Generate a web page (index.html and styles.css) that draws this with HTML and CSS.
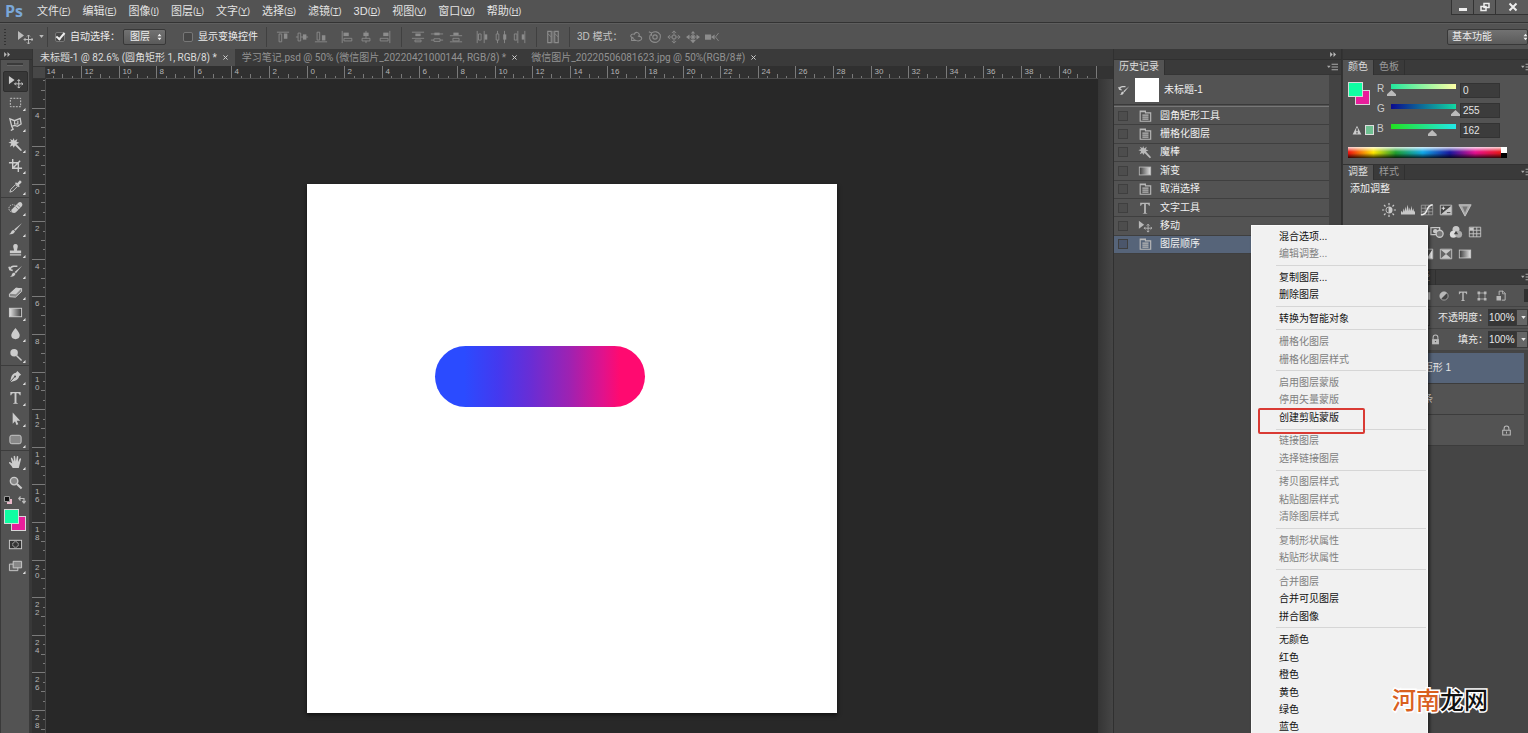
FILE: index.html
```html
<!DOCTYPE html>
<html lang="zh-CN">
<head>
<meta charset="utf-8">
<title>未标题-1 @ 82.6%</title>
<link rel="stylesheet" href="styles.css">
</head>
<body>
<svg class="defs" aria-hidden="true">
  <defs>
    <linearGradient id="fade"><stop offset="0" stop-color="#3a3a3a"/><stop offset="1" stop-color="#e4e4e4"/></linearGradient>
    <linearGradient id="fade-r"><stop offset="0" stop-color="#e4e4e4"/><stop offset="1" stop-color="#3a3a3a"/></linearGradient>
  </defs>
  <symbol id="move" viewBox="0 0 16 16"><path d="M1 2v9l6-4.500z" fill="currentColor"/><path d="M11.500 6v9M7 10.500h9M10 7.500l1.500-1.500L13 7.500M10 13.500l1.500 1.500 1.500-1.500M8.500 9L7 10.500 8.500 12M14.500 9l1.500 1.500-1.500 1.500" fill="none" stroke="currentColor"/></symbol>
  <symbol id="marquee" viewBox="0 0 16 16"><rect x="2.500" y="3.500" width="11" height="9" fill="none" stroke="currentColor" stroke-dasharray="2 1.300"/></symbol>
  <symbol id="lasso" viewBox="0 0 16 16"><path d="M4 11L2 3l5 2 6-2.500 1 6-4 2.500-3-1-3 1 1.500 3L3 15.500" fill="none" stroke="currentColor" stroke-width="1.400"/><path d="M7 5v3.500h3.500V5" fill="none" stroke="currentColor" stroke-width="1.200"/></symbol>
  <symbol id="wand" viewBox="0 0 16 16"><path d="M6 1l1 3 3-2-1 3 3 1-3 1.500L15 14l-1.500 1L7.500 9 6 11.500 5 9l-3 1.500L3.500 7 .5 6l3-1.500L2 2l3 1.500z" fill="currentColor"/></symbol>
  <symbol id="crop" viewBox="0 0 16 16"><path d="M5 1v10h10M1 5h10v10M5 11l8-8" fill="none" stroke="currentColor" stroke-width="1.500"/></symbol>
  <symbol id="dropper" viewBox="0 0 16 16"><path d="M2 14l1-3 5-5 2 2-5 5z" fill="none" stroke="currentColor"/><path d="M7.500 4.500l1-1 1.300 1L12 2c1-1 3 .5 2.200 2L11.500 6.500l1 1.300-1 1z" fill="currentColor"/></symbol>
  <symbol id="heal" viewBox="0 0 16 16"><circle cx="5" cy="9" r="4" fill="none" stroke="currentColor" stroke-dasharray="1.500 1"/><path d="M4 10l7-7q2-1.500 3.500 0t.5 3.500l-6.500 6.500q-2 1.500-4 0t-.5-3z" fill="currentColor"/><path d="M8 7l3.500 3.500M10 5l3 3" stroke="#666" stroke-width=".7"/></symbol>
  <symbol id="brush" viewBox="0 0 16 16"><path d="M15 2L8 10.500 6.500 9z" fill="currentColor"/><path d="M6 9.500L7.500 11q-1.500 4-6.500 3 2-.5 2.500-2.500T6 9.500z" fill="currentColor"/></symbol>
  <symbol id="stamp" viewBox="0 0 16 16"><path d="M6 7Q4.500 2 8 2t2 5l-.5 2H14v3H2V9h4.500zM2 13h12v1.500H2z" fill="currentColor"/></symbol>
  <symbol id="hbrush" viewBox="0 0 16 16"><path d="M15 3L8.500 11 7 9.500zM6.500 10l1.500 1.500q-1 3.500-6 3 2-.5 2-2t2.500-2.500z" fill="currentColor"/><path d="M2 7q1-4 5-3.500h3M5 8L2 7 1 4" fill="none" stroke="currentColor" stroke-width="1.600"/></symbol>
  <symbol id="eraser" viewBox="0 0 16 16"><path d="M1.500 10.500l7-6.500 6 .5-6 6.500z" fill="currentColor"/><path d="M1.500 10.500v3l6.500.5 6.500-6V4.500" fill="#888" stroke="currentColor"/><path d="M1.500 10.500l7-6.500 6 .5-6 6.500z" fill="currentColor"/></symbol>
  <symbol id="gradient" viewBox="0 0 16 16"><rect x="1.500" y="3.500" width="13" height="9" fill="url(#fade-r)" stroke="currentColor"/></symbol>
  <symbol id="drop" viewBox="0 0 16 16"><path d="M8 2q5 6 4.500 8.500Q12 14 8 14t-4.500-3.500Q3 8 8 2z" fill="currentColor"/></symbol>
  <symbol id="dodge" viewBox="0 0 16 16"><circle cx="6.500" cy="6" r="4" fill="currentColor"/><path d="M9 9l5.500 5.500" stroke="currentColor" stroke-width="1.600"/></symbol>
  <symbol id="pen" viewBox="0 0 16 16"><path d="M10 2l4 4-2 1.500q-1 4-4.500 5L2 14l1.500-5.500q1-3.500 5-4.500z" fill="currentColor"/><path d="M2 14l5-5.500" stroke="#444"/><circle cx="7.500" cy="8" r="1" fill="#444"/></symbol>
  <symbol id="type" viewBox="0 0 16 16"><path d="M2.500 2h11v3.500h-1q-.3-2-2-2H9V13q0 1 1.500 1v.7h-5V14Q7 14 7 13V3.500H5.500q-1.700 0-2 2h-1z" fill="currentColor"/></symbol>
  <symbol id="arrow" viewBox="0 0 16 16"><path d="M5 1.500v12l2.500-2.500 1.500 4 2-1-1.700-3.700H13z" fill="currentColor"/></symbol>
  <symbol id="shape" viewBox="0 0 16 16"><rect x="2" y="3.500" width="12" height="9" rx="2" fill="#888" stroke="currentColor"/></symbol>
  <symbol id="hand" viewBox="0 0 16 16"><path d="M5 15q-1-2.500-4-5.500 0-1.500 1.500-.8L4.500 10 3 4.500q.8-1.300 1.600 0L6.300 8 6 2.500q.8-1.500 1.600 0L8.400 8l1-5.500q1-1 1.500.2L10.700 8.500l1.800-3.700q1.200-.8 1.500.5L12.500 11 11.500 15z" fill="currentColor"/></symbol>
  <symbol id="zoom" viewBox="0 0 16 16"><circle cx="6.500" cy="6.500" r="4" fill="#888" stroke="currentColor" stroke-width="1.500"/><path d="M9.500 9.500l5 5" stroke="currentColor" stroke-width="2.200"/></symbol>
  <symbol id="mask" viewBox="0 0 16 16"><rect x="1.500" y="3.500" width="13" height="9" fill="#333" stroke="currentColor"/><circle cx="8" cy="8" r="3" fill="none" stroke="currentColor" stroke-dasharray="1.500 .8"/></symbol>
  <symbol id="screen" viewBox="0 0 16 16"><path d="M1.500 6.500h9v7h-9z" fill="#666" stroke="currentColor"/><path d="M5.500 3.500h9v7h-9z" fill="#888" stroke="currentColor"/></symbol>
  <symbol id="doc" viewBox="0 0 16 16"><path d="M2.500 2.500h6v2h6v9.500h-12z" fill="none" stroke="currentColor" stroke-width="1.300"/><path d="M2.500 3h6M5 7h7M5 9.300h7M5 11.600h7" stroke="currentColor" stroke-width="1.300"/></symbol>
  <symbol id="fadebox" viewBox="0 0 16 16"><rect x="1.500" y="3.500" width="13" height="9" fill="url(#fade)" stroke="currentColor"/></symbol>
  <symbol id="alt" viewBox="0 0 16 16"><path d="M1 2.500h14" stroke="currentColor"/><path d="M3.500 4.500h3v9h-3z" fill="none" stroke="currentColor"/><path d="M9 4h4v6H9z" fill="currentColor"/></symbol>
  <symbol id="amd" viewBox="0 0 16 16"><path d="M1 8h14" stroke="currentColor"/><path d="M3.500 3.500h3v9h-3z" fill="#535353" stroke="currentColor"/><path d="M9 5h4v6H9z" fill="currentColor"/></symbol>
  <symbol id="abt" viewBox="0 0 16 16"><path d="M1 13.500h14" stroke="currentColor"/><path d="M3.500 2.500h3v9h-3z" fill="none" stroke="currentColor"/><path d="M9 6h4v6H9z" fill="currentColor"/></symbol>
  <symbol id="alf" viewBox="0 0 16 16"><path d="M2.500 1v14" stroke="currentColor"/><path d="M4 3h6v4H4z" fill="currentColor"/><path d="M4.500 9.500h9v3h-9z" fill="none" stroke="currentColor"/></symbol>
  <symbol id="act" viewBox="0 0 16 16"><path d="M8 1v14" stroke="currentColor"/><path d="M5 3h6v4H5z" fill="currentColor"/><path d="M3.500 9.500h9v3h-9z" fill="#535353" stroke="currentColor"/></symbol>
  <symbol id="art" viewBox="0 0 16 16"><path d="M13.500 1v14" stroke="currentColor"/><path d="M6 3h6v4H6z" fill="currentColor"/><path d="M2.500 9.500h9v3h-9z" fill="none" stroke="currentColor"/></symbol>
  <symbol id="dvt" viewBox="0 0 16 16"><path d="M1 2.500h14M1 9.500h14" stroke="currentColor"/><path d="M5 4h6v3H5z" fill="currentColor"/><path d="M4.500 11.500h7v2h-7z" fill="none" stroke="currentColor"/></symbol>
  <symbol id="dvm" viewBox="0 0 16 16"><path d="M1 4.500h14M1 11.500h14" stroke="currentColor"/><path d="M5 3h6v3H5z" fill="currentColor"/><path d="M4.500 10h7v3h-7z" fill="#535353" stroke="currentColor"/></symbol>
  <symbol id="dvb" viewBox="0 0 16 16"><path d="M1 6.500h14M1 13.500h14" stroke="currentColor"/><path d="M5 3h6v3H5z" fill="currentColor"/><path d="M4.500 9.500h7v3h-7z" fill="none" stroke="currentColor"/></symbol>
  <symbol id="dhl" viewBox="0 0 16 16"><path d="M2.500 1v14M10.500 1v14" stroke="currentColor"/><path d="M4 4.500h3v7H4z" fill="none" stroke="currentColor"/><path d="M11 5h3v6h-3z" fill="currentColor"/></symbol>
  <symbol id="dhc" viewBox="0 0 16 16"><path d="M4 1v14M12 1v14" stroke="currentColor"/><path d="M2.500 4.500h3v7h-3z" fill="#535353" stroke="currentColor"/><path d="M10.500 5h3.500v6h-3.500z" fill="currentColor"/></symbol>
  <symbol id="dhr" viewBox="0 0 16 16"><path d="M5.500 1v14M13.500 1v14" stroke="currentColor"/><path d="M1.500 4.500h3v7h-3z" fill="none" stroke="currentColor"/><path d="M10 5h3v6h-3z" fill="currentColor"/></symbol>
  <symbol id="auto" viewBox="0 0 16 16"><path d="M2 1.500h4v13H2zM10 1.500h4v13h-4z" fill="none" stroke="currentColor" stroke-width="1.300"/><path d="M8 1v14M2 4l4 4M10 4l4 4" stroke="currentColor"/></symbol>
  <symbol id="orbit" viewBox="0 0 16 16"><path d="M5 9Q0 8 3 5q2-1 3 0 1-3 4-2 3 2 1 4 5 1 3 4-3 3-8 0l-3-3M3 8v4h4" fill="none" stroke="currentColor" stroke-width="1.200"/></symbol>
  <symbol id="roll" viewBox="0 0 16 16"><circle cx="8" cy="8" r="2.500" fill="none" stroke="currentColor" stroke-width="1.300"/><path d="M4 3.500q6-4 10 2 1 6-4 8.500-6 1-8-4-.5-3 1-5M1 2l3 1.500v3" fill="none" stroke="currentColor" stroke-width="1.200"/></symbol>
  <symbol id="pan" viewBox="0 0 16 16"><path d="M8 1v5M8 10v5M1 8h5M10 8h5M5.500 3.500L8 1l2.500 2.500M5.500 12.500L8 15l2.500-2.500M3.500 5.500L1 8l2.500 2.500M12.500 5.500L15 8l-2.500 2.500M6 6h4v4H6z" fill="none" stroke="currentColor"/></symbol>
  <symbol id="slide" viewBox="0 0 16 16"><path d="M8 1l2.500 3h-5zM8 15l-3.500-4h7zM0 8l4-3v6zM16 8l-4-3v6z" fill="currentColor"/><path d="M4 8h8M8 4v7M6 6l4 4M10 6l-4 4" stroke="currentColor" stroke-width="1.200"/></symbol>
  <symbol id="cam" viewBox="0 0 16 16"><path d="M0 5h7v6H0zM7 8l4-3v6z" fill="currentColor"/><path d="M15.500 3.500L12 8l3.500 4.500" fill="none" stroke="currentColor"/></symbol>
  <symbol id="sun" viewBox="0 0 16 16"><path d="M8 4.500a3.500 3.500 0 000 7z" fill="none" stroke="currentColor"/><path d="M8 4a4 4 0 010 8z" fill="currentColor"/><path d="M8 0v2.500M8 13.500V16M0 8h2.500M13.500 8H16M2.300 2.300L4 4M12 12l1.700 1.700M2.300 13.700L4 12M12 4l1.700-1.700" stroke="currentColor" stroke-width="1.400"/></symbol>
  <symbol id="levels" viewBox="0 0 16 16"><path d="M0 13v-3l1-1 1 2 1-5 1 4 1-6 1 5 1.500-7L9 9l1-4 1 4 1-6 1 6 1-3 1 4 1-1v4z" fill="currentColor"/></symbol>
  <symbol id="curves" viewBox="0 0 16 16"><path d="M1.500 2.500h13v11h-13zM1.500 6h13M1.500 10h13M6 2.500v11M10 2.500v11" fill="none" stroke="#aaa" stroke-width=".8"/><path d="M1 13.500q5 0 7-5.500t6.500-6" fill="none" stroke="#eee" stroke-width="1.500"/></symbol>
  <symbol id="expo" viewBox="0 0 16 16"><path d="M1.500 2.500h13v11h-13z" fill="#444" stroke="currentColor"/><path d="M14 3v10H2z" fill="currentColor"/><path d="M3 6h4M5 4v4" stroke="#eee"/><path d="M9 11h4" stroke="#333"/></symbol>
  <symbol id="vib" viewBox="0 0 16 16"><path d="M1 2h14L8 15z" fill="#aaa" stroke="currentColor"/><path d="M5 4h6L8 11z" fill="#777"/></symbol>
  <symbol id="photo" viewBox="0 0 16 16"><path d="M1 3h10v8H1z" fill="none" stroke="currentColor" stroke-width="1.500"/><circle cx="6" cy="7" r="2.500" fill="currentColor"/><circle cx="11" cy="10" r="4" fill="#777" stroke="currentColor" stroke-width="1.500"/></symbol>
  <symbol id="mixer" viewBox="0 0 16 16"><circle cx="8" cy="5" r="4" fill="currentColor"/><circle cx="5" cy="10.500" r="4" fill="#ddd"/><circle cx="11" cy="10.500" r="4" fill="#aaa"/><path d="M8 6.500l2.500 4h-5z" fill="#444"/></symbol>
  <symbol id="lookup" viewBox="0 0 16 16"><path d="M1.500 2.500h13v11h-13z" fill="#555" stroke="currentColor"/><path d="M2 3h4v3H2z" fill="currentColor"/><path d="M1.500 6h13M1.500 10h13M6 2.500v11M10 2.500v11" stroke="currentColor"/></symbol>
  <symbol id="thresh" viewBox="0 0 16 16"><path d="M1.500 2.500h13v11h-13z" fill="#555" stroke="currentColor"/><path d="M2 13l4-3 3 1 5-8v10z" fill="#eee"/></symbol>
  <symbol id="select" viewBox="0 0 16 16"><path d="M1.500 2.500h13v11h-13z" fill="#666" stroke="currentColor"/><path d="M2 3h12L8 8zM2 13h12L8 8z" fill="currentColor"/></symbol>
  <symbol id="half" viewBox="0 0 16 16"><circle cx="8" cy="8" r="5.500" fill="#444" stroke="currentColor"/><path d="M4 12A5.500 5.500 0 0112 4z" fill="currentColor"/></symbol>
  <symbol id="path" viewBox="0 0 16 16"><path d="M4 4h8v8H4z" fill="none" stroke="currentColor"/><path d="M2 2h3.500v3.500H2zM10.500 2H14v3.500h-3.500zM2 10.500h3.500V14H2zM10.500 10.500H14V14h-3.500z" fill="currentColor"/></symbol>
  <symbol id="smart" viewBox="0 0 16 16"><path d="M5.500 7V1.500h5l3 3v9H9" fill="none" stroke="currentColor" stroke-width="1.300"/><path d="M2 8h6v6H2z" fill="currentColor"/><path d="M10 1v4h4" fill="none" stroke="currentColor"/></symbol>
  <symbol id="lock" viewBox="0 0 16 16"><path d="M4.500 8V5q0-3.500 3.500-3.500T11.500 5v3" fill="none" stroke="currentColor" stroke-width="1.500"/><path d="M3 7.500h10V15H3z" fill="currentColor"/><circle cx="8" cy="11" r="1" fill="#444"/></symbol>
  <symbol id="lock-o" viewBox="0 0 16 16"><path d="M4.500 8V5q0-3.500 3.500-3.500T11.500 5v3M2.500 7.500h11v7h-11z" fill="none" stroke="currentColor" stroke-width="1.500"/><path d="M8 9.500v3" stroke="currentColor" stroke-width="1.500"/></symbol>
  <symbol id="warn" viewBox="0 0 16 16"><path d="M8 1l7 14H1z" fill="#ccc"/><path d="M8 5v5M8 11.500v2" stroke="#333" stroke-width="2"/></symbol>
  <symbol id="updown" viewBox="0 0 6 10"><path d="M3 1l2.500 3h-5zM3 9L.5 6h5z" fill="currentColor"/></symbol>
  <symbol id="down" viewBox="0 0 6 4"><path d="M0 0h6L3 4z" fill="currentColor"/></symbol>
  <symbol id="ff" viewBox="0 0 8 6"><path d="M0 0l3 3-3 3zM4 0l3 3-3 3z" fill="currentColor"/></symbol>
  <symbol id="panelmenu" viewBox="0 0 12 8"><path d="M0 2.500h4L2 5zM5 .5h7v1H5zM5 3.500h7v1H5zM5 6.500h7v1H5z" fill="currentColor"/></symbol>
  <symbol id="min" viewBox="0 0 10 10"><path d="M1 6h8v3H1z" fill="currentColor"/></symbol>
  <symbol id="restore" viewBox="0 0 10 10"><path d="M4 1.500h5v4H4zM1 4.500h5v4H1z" fill="#535353" stroke="currentColor" stroke-width="1.500"/></symbol>
  <symbol id="close" viewBox="0 0 10 10"><path d="M1.500 1.500l7 7M8.500 1.500l-7 7" stroke="currentColor" stroke-width="2"/></symbol>
  <symbol id="x" viewBox="0 0 6 6"><path d="M.5.5l5 5M5.500.5l-5 5" stroke="currentColor" stroke-width="1.200"/></symbol>
  <symbol id="mini" viewBox="0 0 8 8"><path d="M3 3h5v5H3z" fill="#e8b8c8"/><path d="M.5.5h5v5h-5z" fill="#111" stroke="#999"/></symbol>
  <symbol id="swap" viewBox="0 0 8 8"><path d="M1 2.500h5v4M2.500 .5L.8 2.500l1.700 2M4.300 5L6 7l1.700-2" fill="none" stroke="currentColor" stroke-width="1.200"/></symbol>
</svg>

<header class="menubar">
  <span class="logo">Ps</span>
  <nav class="menus">
    <button>文件<small>(<u>F</u>)</small></button><button>编辑<small>(<u>E</u>)</small></button><button>图像<small>(<u>I</u>)</small></button><button>图层<small>(<u>L</u>)</small></button><button>文字<small>(<u>Y</u>)</small></button><button>选择<small>(<u>S</u>)</small></button><button>滤镜<small>(<u>T</u>)</small></button><button>3D<small>(<u>D</u>)</small></button><button>视图<small>(<u>V</u>)</small></button><button>窗口<small>(<u>W</u>)</small></button><button>帮助<small>(<u>H</u>)</small></button>
  </nav>
  <div class="winbtns">
    <button aria-label="最小化"><svg><use href="#min"/></svg></button><button aria-label="还原"><svg><use href="#restore"/></svg></button><button class="wide" aria-label="关闭"><svg><use href="#close"/></svg></button>
  </div>
</header>

<div class="options">
  <span class="grip"></span>
  <button class="current" aria-label="移动工具"><svg class="ic"><use href="#move"/></svg><svg class="caret"><use href="#down"/></svg></button>
  <i class="bar"></i>
  <label class="check"><input type="checkbox" checked>自动选择：</label>
  <span class="picker auto"><select aria-label="自动选择"><option>图层</option></select><svg><use href="#updown"/></svg></span>
  <label class="check second"><input type="checkbox">显示变换控件</label>
  <i class="bar"></i>
  <div class="icons"><svg><use href="#alt"/></svg><svg><use href="#amd"/></svg><svg><use href="#abt"/></svg></div>
  <div class="icons"><svg><use href="#alf"/></svg><svg><use href="#act"/></svg><svg><use href="#art"/></svg></div>
  <i class="bar"></i>
  <div class="icons"><svg><use href="#dvt"/></svg><svg><use href="#dvm"/></svg><svg><use href="#dvb"/></svg></div>
  <div class="icons"><svg><use href="#dhl"/></svg><svg><use href="#dhc"/></svg><svg><use href="#dhr"/></svg></div>
  <i class="bar"></i>
  <div class="icons"><svg><use href="#auto"/></svg></div>
  <i class="bar"></i>
  <span class="mode">3D 模式：</span>
  <div class="icons"><svg><use href="#orbit"/></svg><svg><use href="#roll"/></svg><svg><use href="#pan"/></svg><svg><use href="#slide"/></svg><svg><use href="#cam"/></svg></div>
  <span class="picker space"><select aria-label="工作区"><option>基本功能</option></select><svg><use href="#updown"/></svg></span>
</div>

<main class="work">
  <aside class="toolcol">
    <div class="strip left"><svg><use href="#ff"/></svg></div>
    <div class="tools">
      <span class="handle"></span>
      <button class="tool on" aria-label="移动"><svg><use href="#move"/></svg></button>
      <button class="tool more" aria-label="选框"><svg><use href="#marquee"/></svg></button>
      <button class="tool more" aria-label="套索"><svg><use href="#lasso"/></svg></button>
      <button class="tool more" aria-label="魔棒"><svg><use href="#wand"/></svg></button>
      <button class="tool more" aria-label="裁剪"><svg><use href="#crop"/></svg></button>
      <button class="tool more" aria-label="吸管"><svg><use href="#dropper"/></svg></button>
      <hr>
      <button class="tool more" aria-label="修复画笔"><svg><use href="#heal"/></svg></button>
      <button class="tool more" aria-label="画笔"><svg><use href="#brush"/></svg></button>
      <button class="tool more" aria-label="图章"><svg><use href="#stamp"/></svg></button>
      <button class="tool more" aria-label="历史画笔"><svg><use href="#hbrush"/></svg></button>
      <button class="tool more" aria-label="橡皮擦"><svg><use href="#eraser"/></svg></button>
      <button class="tool more" aria-label="渐变"><svg><use href="#gradient"/></svg></button>
      <button class="tool more" aria-label="模糊"><svg><use href="#drop"/></svg></button>
      <button class="tool more" aria-label="减淡"><svg><use href="#dodge"/></svg></button>
      <hr>
      <button class="tool more" aria-label="钢笔"><svg><use href="#pen"/></svg></button>
      <button class="tool more" aria-label="文字"><svg><use href="#type"/></svg></button>
      <button class="tool more" aria-label="路径选择"><svg><use href="#arrow"/></svg></button>
      <button class="tool more" aria-label="圆角矩形"><svg><use href="#shape"/></svg></button>
      <hr>
      <button class="tool more" aria-label="抓手"><svg><use href="#hand"/></svg></button>
      <button class="tool" aria-label="缩放"><svg><use href="#zoom"/></svg></button>
      <div class="minis"><svg><use href="#mini"/></svg><svg><use href="#swap"/></svg></div>
      <div class="swatches"><button class="fg" aria-label="前景色"></button><button class="bg" aria-label="背景色"></button></div>
      <button class="tool" aria-label="快速蒙版"><svg><use href="#mask"/></svg></button>
      <button class="tool more" aria-label="屏幕模式"><svg><use href="#screen"/></svg></button>
    </div>
  </aside>

  <section class="document">
    <div class="tabs">
      <div class="tab on"><button>未标题-1 @ 82.6% (圆角矩形 1, RGB/8) *</button><button class="x" aria-label="关闭"><svg><use href="#x"/></svg></button></div>
      <div class="tab"><button>学习笔记.psd @ 50% (微信图片_20220421000144, RGB/8) *</button><button class="x" aria-label="关闭"><svg><use href="#x"/></svg></button></div>
      <div class="tab"><button>微信图片_20220506081623.jpg @ 50%(RGB/8#)</button><button class="x" aria-label="关闭"><svg><use href="#x"/></svg></button></div>
    </div>
    <div class="stage">
      <span class="corner"></span>
      <svg class="ruler" id="ruler-h"></svg>
      <span class="gutter top"></span>
      <svg class="ruler" id="ruler-v"></svg>
      <div class="canvas"><div class="page" id="page"><div class="pill"></div></div></div>
      <span class="gutter"></span>
    </div>
  </section>

  <aside class="history">
    <div class="strip"><svg><use href="#ff"/></svg></div>
    <div class="ptabs"><button class="on">历史记录</button><svg><use href="#panelmenu"/></svg></div>
    <div class="hbody">
      <div class="snap"><svg><use href="#hbrush"/></svg><span class="thumb"></span>未标题-1</div>
      <ul class="states">
        <li><input type="checkbox" aria-label="圆角矩形工具"><svg><use href="#doc"/></svg>圆角矩形工具</li>
        <li><input type="checkbox" aria-label="栅格化图层"><svg><use href="#doc"/></svg>栅格化图层</li>
        <li><input type="checkbox" aria-label="魔棒"><svg><use href="#wand"/></svg>魔棒</li>
        <li><input type="checkbox" aria-label="渐变"><svg><use href="#fadebox"/></svg>渐变</li>
        <li><input type="checkbox" aria-label="取消选择"><svg><use href="#doc"/></svg>取消选择</li>
        <li><input type="checkbox" aria-label="文字工具"><svg><use href="#type"/></svg>文字工具</li>
        <li><input type="checkbox" aria-label="移动"><svg><use href="#move"/></svg>移动</li>
        <li class="on"><input type="checkbox" aria-label="图层顺序"><svg><use href="#doc"/></svg>图层顺序</li>
      </ul>
    </div>
  </aside>

  <aside class="right">
    <div class="strip"></div>
    <div class="ptabs"><button class="on">颜色</button><button>色板</button><svg><use href="#panelmenu"/></svg></div>
    <div class="color">
      <div class="mix">
        <div class="swcol">
          <div class="swatches"><button class="fg" aria-label="前景色"></button><button class="bg" aria-label="背景色"></button></div>
          <div class="gamut"><svg><use href="#warn"/></svg><span></span></div>
        </div>
        <div class="channels">
          <label class="chan"><span>R</span><input class="red" type="range" min="0" max="255" value="0"><input type="text" value="0" aria-label="R 值"></label>
          <label class="chan"><span>G</span><input class="green" type="range" min="0" max="255" value="255"><input type="text" value="255" aria-label="G 值"></label>
          <label class="chan"><span>B</span><input class="blue" type="range" min="0" max="255" value="162"><input type="text" value="162" aria-label="B 值"></label>
        </div>
      </div>
      <div class="spectrum"><span></span></div>
    </div>
    <div class="ptabs"><button class="on">调整</button><button>样式</button><svg><use href="#panelmenu"/></svg></div>
    <div class="adjust">
      <p>添加调整</p>
      <div><svg><use href="#sun"/></svg><svg><use href="#levels"/></svg><svg><use href="#curves"/></svg><svg><use href="#expo"/></svg><svg><use href="#vib"/></svg></div>
      <div><svg><use href="#lookup"/></svg><svg><use href="#mixer"/></svg><svg><use href="#half"/></svg><svg><use href="#photo"/></svg><svg><use href="#mixer"/></svg><svg><use href="#lookup"/></svg></div>
      <div><svg><use href="#expo"/></svg><svg><use href="#levels"/></svg><svg><use href="#thresh"/></svg><svg><use href="#select"/></svg><svg><use href="#fadebox"/></svg></div>
    </div>
    <div class="ptabs"><button class="on">图层</button><button>通道</button><button>路径</button><svg><use href="#panelmenu"/></svg></div>
    <div class="lrow filter"><svg><use href="#fadebox"/></svg><svg><use href="#half"/></svg><svg><use href="#type"/></svg><svg><use href="#path"/></svg><svg><use href="#smart"/></svg><i class="toggle"></i></div>
    <div class="lrow"><span class="picker blend"><svg><use href="#updown"/></svg></span><label for="opacity">不透明度：</label><input id="opacity" type="text" value="100%"><button class="drop" aria-label="不透明度滑块"><svg><use href="#down"/></svg></button></div>
    <div class="lrow"><svg class="lk"><use href="#lock"/></svg><label for="fill">填充：</label><input id="fill" type="text" value="100%"><button class="drop" aria-label="填充滑块"><svg><use href="#down"/></svg></button></div>
    <ul class="layers">
      <li class="on"><span>圆角矩形 1</span></li>
      <li><span class="short">线条</span></li>
      <li><span class="short"></span><svg><use href="#lock-o"/></svg></li>
    </ul>
  </aside>
</main>

<div class="context">
  <button>混合选项...</button><button disabled>编辑调整...</button><hr>
  <button>复制图层...</button><button>删除图层</button><hr>
  <button>转换为智能对象</button><hr>
  <button disabled>栅格化图层</button><button disabled>栅格化图层样式</button><hr>
  <button disabled>启用图层蒙版</button><button disabled>停用矢量蒙版</button><button class="marked">创建剪贴蒙版</button><hr>
  <button disabled>链接图层</button><button disabled>选择链接图层</button><hr>
  <button disabled>拷贝图层样式</button><button disabled>粘贴图层样式</button><button disabled>清除图层样式</button><hr>
  <button disabled>复制形状属性</button><button disabled>粘贴形状属性</button><hr>
  <button disabled>合并图层</button><button>合并可见图层</button><button>拼合图像</button><hr>
  <button>无颜色</button><button>红色</button><button>橙色</button><button>黄色</button><button>绿色</button><button>蓝色</button>
</div>
<div class="brand"><span>河南</span>龙网</div>
<script src="rulers.js"></script>
</body>
</html>
```
FILE: styles.css
```css
*, *::after { box-sizing: border-box; }
body {
  margin: 0; height: 100vh; overflow: hidden; position: relative;
  display: flex; flex-direction: column;
  background: #535353; color: #e4e4e4;
  font: 10px/14px "Liberation Sans", "Noto Sans CJK SC", sans-serif;
}
button, input, select { font: inherit; color: inherit; margin: 0; padding: 0; border: 0; background: none; }
ul { list-style: none; margin: 0; padding: 0; }
hr { margin: 0; border: 0; }
svg { display: block; flex: none; }
.defs { position: absolute; width: 0; height: 0; }

.menubar { display: flex; align-items: center; height: 23px; border-bottom: 1px solid #333; flex: none; }
.logo { width: 37px; padding-left: 5px; color: #7aa7d8; font: bold 16px/20px "Open Sans", sans-serif; }
.menus { display: flex; gap: 12px; flex: 1; }
.menus button { display: flex; align-items: center; font-size: 11px; }
.menus small { font-size: 9px; }
.winbtns { display: flex; align-self: flex-start; }
.winbtns button { width: 22px; height: 15px; display: flex; align-items: center; justify-content: center; border: 1px solid #333; border-width: 0 0 1px 1px; background: #5c5c5c; color: #eee; }
.winbtns .wide { width: 33px; padding-left: 2px; }
.winbtns svg { width: 10px; height: 10px; }

.options { display: flex; align-items: center; height: 26px; flex: none; border-top: 1px solid #5e5e5e; }
.grip { width: 2px; height: 16px; margin: 0 11px 0 4px; background: repeating-linear-gradient(#333 0 1px, #535353 1px 3px); }
.current { display: flex; align-items: center; gap: 6px; color: #bbb; }
.ic { width: 16px; height: 16px; }
.caret { width: 5px; height: 3px; }
.bar { width: 1px; height: 20px; background: #404040; margin: 0 3px; }
.check { display: flex; align-items: center; gap: 5px; padding-left: 4px; color: #ececec; }
.check.second { padding-left: 17px; margin-right: 5px; }
.check input { appearance: none; width: 10px; height: 10px; background: #474747; border: 1px solid #777; border-radius: 2px; }
.check input:checked::after { content: ""; display: block; width: 5px; height: 9px; margin: -2px 0 0 2px; border: solid #eee; border-width: 0 2px 2px 0; transform: rotate(40deg); }
.picker { position: relative; display: block; }
.auto { margin-left: 3px; }
.picker select { appearance: none; display: block; width: 43px; height: 16px; padding: 0 6px; border: 1px solid #383838; border-radius: 2px; background: linear-gradient(#727272, #5a5a5a); color: #eee; }
.picker svg { position: absolute; right: 4px; top: 4px; width: 5px; height: 8px; color: #eee; }
.icons { display: flex; gap: 5px; margin: 0 6px; color: #8c8c8c; }
.icons svg { width: 14px; height: 14px; }
.mode { padding-left: 4px; color: #c4c4c4; }
.space { margin-left: auto; }
.space select { width: 81px; padding: 0 4px; }
.space svg { right: 0; }

.work { display: flex; flex: 1; min-height: 0; }
.strip { height: 11px; flex: none; background: #393939; display: flex; align-items: center; justify-content: flex-end; padding: 0 4px; color: #bbb; border-bottom: 1px solid #303030; }
.strip.left { justify-content: flex-start; }
.strip svg { width: 7px; height: 5px; }

.toolcol { width: 32px; flex: none; background: #383838; }
.tools { width: 30px; height: 100%; display: flex; flex-direction: column; align-items: center; background: #535353; border: 1px solid #3a3a3a; border-width: 0 1px; }
.handle { width: 16px; height: 3px; margin: 3px 0 5px; background: #3a3a3a; border-bottom: 1px solid #666; }
.tool { position: relative; width: 25px; height: 21px; flex: none; display: flex; align-items: center; justify-content: center; color: #ccc; }
.tool svg { width: 15px; height: 15px; }
.tool.on { background: #383838; border: 1px solid #2e2e2e; border-radius: 2px; }
.more::after { content: ""; position: absolute; right: 2px; bottom: 2px; width: 3px; height: 3px; background: #ddd; clip-path: polygon(100% 0, 100% 100%, 0 100%); }
.tools hr { width: 28px; height: 1px; background: #3c3c3c; flex: none; }
.tools hr:first-of-type { margin-bottom: -1px; }
.minis { display: flex; gap: 6px; height: 14px; align-items: center; color: #bbb; }
.minis svg { width: 8px; height: 8px; }
.swatches { position: relative; width: 22px; height: 22px; }
.swatches button { position: absolute; width: 15px; height: 15px; border: 1px solid #d8d8d8; }
.swatches .fg { left: 0; top: 0; background: #0fffa2; z-index: 1; }
.swatches .bg { right: 0; bottom: 0; background: #e81e9b; }
.tools .swatches { margin: 2px 0 3px; flex: none; }

.document { flex: 1; min-width: 0; display: flex; flex-direction: column; }
.tabs { display: flex; height: 17px; background: #3a3a3a; flex: none; font-family: Roboto, "Noto Sans CJK SC", sans-serif; }
.tab { display: flex; align-items: center; gap: 6px; padding: 0 7px; color: #929292; white-space: nowrap; }
.tab.on { background: #4e4e4e; color: #dcdcdc; border-left: 1px solid #333; }
.tab .x { color: #ccc; }
.tab .x svg { width: 5px; height: 5px; }
.stage { flex: 1; min-height: 0; display: grid; grid-template: 13px 1fr / 14px 1fr 15px; background: #282828; }
.corner { background: #474747; border: 1px solid #333; }
.ruler { width: 100%; height: 100%; background: #303030; color: #7a7a7a; overflow: hidden; }
.ruler text { fill: #b4b4b4; font-size: 8px; }
.canvas { overflow: hidden; display: flex; justify-content: center; align-items: flex-start; padding-top: 105px; }
.page { width: 530px; height: 529px; flex: none; padding: 162px 128px; background: #fff; box-shadow: 0 2px 4px #111; }
.pill { width: 210px; height: 61px; border-radius: 31px; background: linear-gradient(90deg, #2b4bff 14%, #4439ef 30%, #6a2dd4 46%, #9e22b2 64%, #e0128c 80%, #ff0a70 88%); }
.gutter { background: linear-gradient(90deg, #353535, #464646); }
.gutter.top { background: #333; }

.history { width: 229px; flex: none; background: #434343; border-left: 1px solid #303030; border-right: 1px solid #303030; }
.ptabs { display: flex; align-items: center; height: 15px; flex: none; background: #3a3a3a; border-bottom: 1px solid #353535; color: #999; }
.ptabs button { height: 15px; padding: 0 5px; border-right: 1px solid #303030; }
.ptabs .on { background: #535353; color: #dcdcdc; }
.ptabs svg { width: 11px; height: 8px; margin-left: auto; color: #aaa; }
.history .ptabs svg { margin-right: 3px; }
.hbody { width: 215px; background: #535353; }
.snap { display: flex; align-items: center; height: 30px; gap: 5px; padding-left: 4px; border-bottom: 1px solid #3a3a3a; color: #f0f0f0; }
.snap svg { width: 12px; height: 12px; color: #ccc; }
.thumb { width: 24px; height: 24px; background: #fff; }
.states { display: flex; flex-direction: column; height: 148px; border-top: 1px solid #777; margin-top: 1px; color: #f0f0f0; }
.states li { flex: 1; display: flex; align-items: center; padding-left: 4px; border-bottom: 1px solid #3f3f3f; }
.states input { appearance: none; width: 10px; height: 10px; border: 1px solid #3f3f3f; background: #4d4d4d; }
.states svg { width: 14px; height: 14px; margin: 0 8px 0 10px; color: #b8b8b8; }
.states .on { background: #566479; }
.states .on input { background: #4b566b; }

.right { width: 186px; flex: none; display: flex; flex-direction: column; background: #454545; overflow: hidden; border-left: 1px solid #333; }
.right .ptabs svg { margin-right: -4px; }
.color { background: #535353; padding: 5px 4px; height: 90px; border-bottom: 1px solid #333; }
.mix { display: flex; }
.swcol { width: 27px; padding-top: 2px; }
.swcol .swatches { margin-left: 1px; height: 23px; }
.gamut { display: flex; gap: 3px; margin: 20px 0 0 5px; }
.gamut svg { width: 10px; height: 10px; }
.gamut span { width: 10px; height: 10px; background: #6fc092; border: 1px solid #ddd; }
.chan { display: flex; align-items: center; height: 20px; }
.chan span { width: 13px; padding: 0 0 3px 3px; color: #ccc; }
.chan [type=range] { appearance: none; width: 73px; height: 14px; background: none; }
.chan [type=range]::-webkit-slider-runnable-track { height: 12px; background: var(--ramp) center top / 65px 5px no-repeat; }
.chan [type=range]::-webkit-slider-thumb { appearance: none; width: 9px; height: 6px; margin-top: 6px; background: #bbb; clip-path: polygon(50% 0, 100% 70%, 100% 100%, 0 100%, 0 70%); }
.red { --ramp: linear-gradient(90deg, #22e89c, #ffffa6); }
.green { --ramp: linear-gradient(90deg, #0a0a90, #12d8a2); }
.blue { --ramp: linear-gradient(90deg, #22e020, #22e8e8); }
.chan [type=text] { width: 40px; height: 15px; padding: 0 2px; background: #3c3c3c; border: 1px solid #333; }
.spectrum { width: 159px; height: 11px; margin: 7px 0 0 1px; display: flex; justify-content: flex-end; background: linear-gradient(rgba(255,255,255,.85), rgba(255,255,255,0) 45%, rgba(0,0,0,0) 55%, rgba(0,0,0,.8)), linear-gradient(90deg, #f01010, #ffe800 16%, #20a030 30%, #10a8e8 47%, #1818a0 64%, #e81090 80%, #e81818 96%); }
.spectrum span { width: 6px; background: linear-gradient(#fff 50%, #000 50%); }
.adjust { background: #535353; height: 90px; padding: 2px 7px; border-bottom: 1px solid #333; }
.adjust p { margin: 0; height: 17px; color: #f0f0f0; }
.adjust div { display: flex; gap: 5px; width: 154px; height: 22px; justify-content: center; align-items: center; color: #c8c8c8; }
.adjust svg { width: 14px; height: 14px; }
.lrow { display: flex; align-items: center; justify-content: flex-end; height: 22px; flex: none; background: #535353; border-bottom: 1px solid #444; color: #e8e8e8; }
.lrow input { width: 28px; height: 17px; padding: 0 1px; background: #363636; }
.lrow .drop { width: 12px; height: 17px; padding-left: 4px; background: #666; border: 1px solid #3a3a3a; }
.drop svg { width: 5px; height: 3px; }
.filter { gap: 7px; color: #b8b8b8; }
.filter svg { width: 12px; height: 12px; }
.toggle { width: 4px; height: 13px; margin-left: 10px; background: #303030; }
.blend { width: 80px; height: 17px; border: 1px solid #3a3a3a; background: #606060; margin-right: 8px; }
.blend svg { right: 1px; }
.lk { width: 11px; height: 11px; margin-right: 17px; color: #bbb; }
.layers { width: 181px; margin-top: 2px; background: #535353; }
.layers li { height: 31px; display: flex; align-items: center; justify-content: space-between; padding-right: 12px; border-bottom: 1px solid #3c3c3c; }
.layers .on { background: #566479; }
.layers span { width: 108px; text-align: right; }
.layers .short { width: 90px; }
.layers svg { width: 11px; height: 11px; color: #bbb; }

.context { position: absolute; right: 100px; top: 225px; width: 177px; height: 514px; padding: 2px 0; display: flex; flex-direction: column; background: #f1f1f1; border: 1px solid #fafafa; box-shadow: 2px 2px 3px rgba(0, 0, 0, .5); color: #111; }
.context button { position: relative; flex: 1; text-align: left; padding-left: 27px; line-height: 16px; }
.context button:disabled { color: #808080; }
.context hr { height: 1px; margin: 2px 1px 3px 24px; background: #d6d6d6; }
.marked::after { content: ""; position: absolute; left: 6px; top: -1px; width: 107px; height: 26px; border: 2px solid #d93a34; border-radius: 2px; }
.brand { position: absolute; right: 40px; bottom: 16px; font: 500 24px/36px "Noto Sans CJK SC", sans-serif; color: #111; -webkit-text-stroke: 3px #fff; paint-order: stroke fill; }
.brand span { color: #d9601f; }
```
FILE: rulers.js
```js
// Draws both rulers so that zero lines up with the page's top left corner.
const NS = "http://www.w3.org/2000/svg";
const PX_PER_LABEL = 37.6;
const page = document.getElementById("page");

function add(svg, name, attrs, text) {
  const el = document.createElementNS(NS, name);
  for (const key in attrs) el.setAttribute(key, attrs[key]);
  if (text !== undefined) el.textContent = text;
  svg.append(el);
}

function draw(svg, vertical) {
  svg.replaceChildren();
  const box = svg.getBoundingClientRect();
  const pageBox = page.getBoundingClientRect();
  const origin = vertical ? pageBox.top - box.top : pageBox.left - box.left;
  const length = vertical ? box.height : box.width;
  const depth = vertical ? box.width : box.height;
  const step = PX_PER_LABEL / 4;
  for (let i = Math.ceil(-(origin + 4) / step); origin + i * step < length; i++) {
    const at = Math.floor(origin + i * step) + 0.5;
    const size = i % 4 === 0 ? depth : i % 2 === 0 ? 5 : 3;
    add(svg, "path", {
      d: vertical ? `M${depth} ${at}h${-size}` : `M${at} ${depth}v${-size}`,
      stroke: "currentColor"
    });
    if (i % 4 !== 0 || at + 12 > length) continue;
    const label = String(Math.abs(i / 2));
    if (vertical) {
      [...label].forEach((digit, n) => add(svg, "text", { x: 3, y: at + 9 + n * 8 }, digit));
    } else {
      add(svg, "text", { x: at + 3, y: 8 }, label);
    }
  }
  add(svg, "path", {
    d: vertical ? `M${depth - 0.5} 0v${length}` : `M0 ${depth - 0.5}h${length}`,
    stroke: "#4a4a4a"
  });
}

function drawAll() {
  draw(document.getElementById("ruler-h"), false);
  draw(document.getElementById("ruler-v"), true);
}
drawAll();
addEventListener("resize", drawAll);
```
